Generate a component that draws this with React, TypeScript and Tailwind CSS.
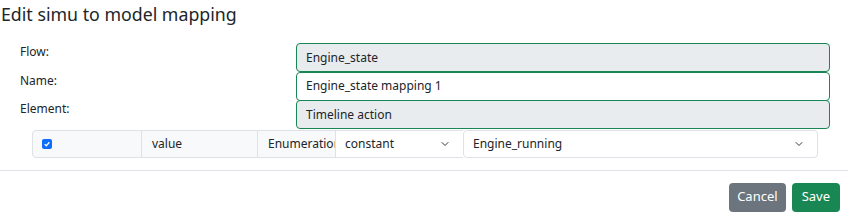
import { ChevronDown } from "lucide-react";

const font = { fontFamily: '"Noto Sans", "Open Sans", sans-serif' };

function Field({ label, value, disabled }: { label: string; value: string; disabled?: boolean }) {
  return (
    <div className="flex h-[28.5px] items-start">
      <div className="w-[296px] pl-[20px] pt-[2px] text-[12px] leading-[14px] text-[#212529]">{label}</div>
      <div
        className={`flex h-[29px] w-[534px] items-center rounded-[4px] border border-[#198754] px-[9px] text-[12px] text-[#212529] ${
          disabled ? "bg-[#e9ecef]" : "bg-white"
        }`}
      >
        {value}
      </div>
    </div>
  );
}

export default function App() {
  return (
    <div className="h-[222px] w-[848px] overflow-hidden bg-white text-[#212529]" style={font}>
      <h1 className="pl-px pt-[1px] text-[17.75px] leading-[26px] text-[#212529]">Edit simu to model mapping</h1>

      <div className="mt-[16px] flex flex-col gap-0">
        <Field label="Flow:" value="Engine_state" disabled />
        <Field label="Name:" value="Engine_state mapping 1" />
        <Field label="Element:" value="Timeline action" disabled />
      </div>

      <div className="ml-[32px] mt-[1px] flex h-[28px] w-[786px] text-[12px]">
        <div className="flex w-[110px] items-center rounded-l-[4px] border border-[#dee2e6] bg-[#f8f9fa] pl-[9px]">
          <span className="flex h-[10px] w-[10px] items-center justify-center rounded-[2px] bg-[#0d6efd]">
            <svg viewBox="0 0 10 10" className="h-[8px] w-[8px]">
              <path d="M2 5.2 L4.1 7.2 L8 2.8" stroke="white" strokeWidth="1.6" fill="none" />
            </svg>
          </span>
        </div>
        <div className="flex w-[116px] items-center border-y border-r border-[#dee2e6] bg-[#f8f9fa] pl-[10px]">value</div>
        <div className="flex w-[78px] items-center overflow-hidden whitespace-nowrap border-y border-r border-[#dee2e6] bg-[#f8f9fa] pl-[10px]">
          Enumeration
        </div>
        <div className="flex w-[127px] items-center justify-between border-y border-[#dee2e6] bg-white pl-[9px] pr-[12px]">
          <span>constant</span>
          <ChevronDown className="h-[12px] w-[12px] text-[#343a40]" strokeWidth={2} />
        </div>
        <div className="flex flex-1 items-center justify-between rounded-[4px] border border-[#dee2e6] bg-white pl-[9px] pr-[12px]">
          <span>Engine_running</span>
          <ChevronDown className="h-[12px] w-[12px] text-[#343a40]" strokeWidth={2} />
        </div>
      </div>

      <div className="mt-[12px] border-t border-[#dee2e6]" />

      <div className="flex justify-end gap-[6px] pr-[8px] pt-[12px]">
        <button className="h-[29px] rounded-[4px] bg-[#6c757d] px-[8px] text-[13px] text-white">Cancel</button>
        <button className="h-[29px] rounded-[4px] bg-[#198754] px-[10px] text-[13px] text-white">Save</button>
      </div>
    </div>
  );
}
